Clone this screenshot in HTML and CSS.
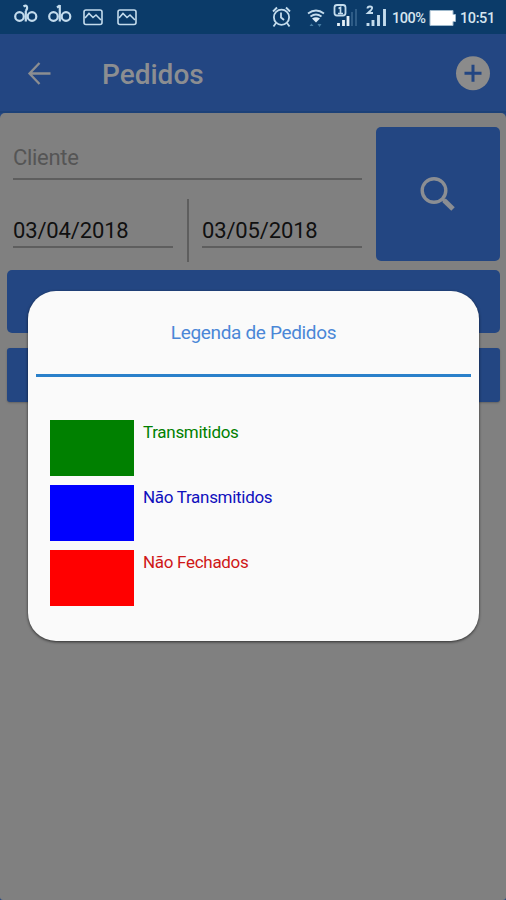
FILE: index.html
```html
<!DOCTYPE html>
<html lang="pt-BR">
<head>
<meta charset="utf-8">
<title>Pedidos</title>
<link rel="stylesheet" href="styles.css">
</head>
<body>
<div class="statusbar">
  <svg class="status-icons" width="140" height="34" viewBox="0 0 140 34" fill="none" stroke="#c4dced" stroke-width="2.200">
    <g><circle cx="19.500" cy="16.500" r="4.300"/><circle cx="32" cy="16.500" r="4.300"/><path d="M25.800 11v10.500M23.500 6.500q3-2 3.500.5t-1.500 4"/></g>
    <g><circle cx="53.500" cy="16.500" r="4.300"/><circle cx="66" cy="16.500" r="4.300"/><path d="M59.800 5v16.500M57 7.500l2.800-2"/></g>
    <g stroke-width="1.600"><rect x="84" y="10" width="18" height="14.500" rx="2"/><path d="M85 18l4-4.500 4 4 3-2.500 5 5"/><rect x="118" y="10" width="18" height="14.500" rx="2"/><path d="M119 18l4-4.500 4 4 3-2.500 5 5"/></g>
  </svg>
  <svg class="system-icons" width="118" height="34" viewBox="270 0 118 34" fill="none" stroke="#c4dced">
    <circle cx="281.500" cy="17.300" r="7.600" stroke-width="1.800"/><path d="M281 12.500v5l3 2.500M273 11.500l4-4M286 7.500l4 4M276 23l-2.500 3.500M287 23l2.500 3.500" stroke-width="1.800"/>
    <path d="M308 13.500q8-6 16 0M310.500 16.500q5.500-4 11 0" stroke-width="1.800"/><path d="M312 18.500q4-2.500 8 0l-4 4z" fill="#dcecf7" stroke="none"/><path d="M309.500 26l2-2.500 2 2.500zM317.500 24h4l-2 3z" fill="#477da3" stroke="none"/>
    <rect x="334.500" y="5" width="11" height="10.500" rx="2.500" stroke-width="1.800"/><path d="M338.500 8.500l2-1v6M338 13.500h5" stroke-width="1.700"/>
    <path d="M338.500 23v3M343.500 20v6M348 16v10" stroke="#e5f0f7" stroke-width="2.800"/><path d="M352 12v14M356 9v17" stroke="#32618a" stroke-width="1.800"/>
    <path d="M367.500 8.500q0-2 2.500-2t2 2q0 1-4 4.500h5" stroke-width="1.900"/><path d="M368 23v3M373 20v6M378.500 15v11M384.500 9v17" stroke-width="2.900"/>
  </svg>
  <span class="battery-text">100%</span>
  <svg class="battery" width="27" height="18" viewBox="0 0 27 18"><path d="M1 1.500h23v4h2.500v7H24v4H1z" fill="#fff" stroke="#9fb9cc"/></svg>
  <span class="clock">10:51</span>
</div>
<header class="appbar">
  <svg width="24" height="24" viewBox="0 0 24 24" fill="none" stroke="#8c8e91" stroke-width="2.300"><path d="M23.500 12.500H2.500M12.500 2L2.500 12.500l10 10.500"/></svg>
  <h1>Pedidos</h1>
  <svg class="add" width="36" height="36" viewBox="0 0 36 36"><circle cx="18" cy="18.300" r="17" fill="#8b8b8b"/><path d="M18 9.800v17M9.500 18.300h17" stroke="#234682" stroke-width="3"/></svg>
</header>
<main>
  <section class="filters">
    <div class="fields">
      <div class="field client">Cliente</div>
      <div class="dates"><div class="field">03/04/2018</div><div class="divider"></div><div class="field">03/05/2018</div></div>
    </div>
    <div class="search"><svg width="36" height="36" viewBox="0 0 36 36" fill="none" stroke="#8b8e93"><circle cx="14" cy="14.500" r="11.800" stroke-width="3.400"/><path d="M22 22.500l3 3" stroke-width="3"/><path d="M24 24.200l9 8.800" stroke-width="5"/></svg></div>
  </section>
  <div class="bar first"></div>
  <div class="bar second"></div>
</main>
<section class="dialog">
  <h2>Legenda de Pedidos</h2>
  <ul>
    <li class="sent"><i></i><span>Transmitidos</span></li>
    <li class="unsent"><i></i><span>Não Transmitidos</span></li>
    <li class="open"><i></i><span>Não Fechados</span></li>
  </ul>
</section>
</body>
</html>
```
FILE: styles.css
```css
* { box-sizing: border-box; }
body { margin: 0; width: 506px; height: 900px; overflow: hidden; position: relative; background: #234682; font-family: Roboto, sans-serif; }
svg { display: block; flex: none; }
.statusbar { height: 34px; display: flex; align-items: center; background: #0b3b69; color: #d6e5ef; font-size: 14.5px; font-weight: 500; }
.system-icons { margin-left: 130px; }
.battery-text { width: 36px; margin-left: 4px; letter-spacing: -.5px; white-space: nowrap; padding-top: 2px; }
.battery { margin: 1px 0 0 1px; }
.clock { margin-left: 4px; padding-top: 2px; letter-spacing: -.4px; }
.appbar { height: 79px; display: flex; align-items: center; padding: 0 15px 0 27px; background: #234682; border-bottom: 2px solid #1c4178; }
h1 { margin: 4px 0 0 51px; color: #8c8e91; font-size: 28px; font-weight: 500; line-height: 36px; }
.add { margin-left: auto; }
main { height: 787px; background: #808080; border-radius: 5px 5px 3px 3px; padding: 14px 6px 0 7px; }
.filters { display: flex; justify-content: space-between; height: 134px; }
.fields { width: 349px; margin-left: 6px; }
.field { font-size: 22px; line-height: 28px; letter-spacing: -.15px; color: #101010; border-bottom: 2px solid #5e5e5e; }
.client { height: 53px; padding-top: 17px; color: #555; letter-spacing: -.3px; }
.dates { display: flex; justify-content: space-between; height: 63px; margin-top: 19px; }
.dates .field { width: 160px; height: 49px; padding-top: 18px; }
.divider { width: 2px; height: 63px; background: #5e5e5e; }
.search { width: 124px; height: 134px; border-radius: 5px; display: flex; align-items: center; justify-content: center; background: #234682; }
.bar { background: #234682; border-radius: 5px; }
.first { height: 63px; margin-top: 9px; }
.second { height: 54px; margin-top: 15px; border-radius: 3px; box-shadow: 0 1px 2px #626262; }
.dialog { position: absolute; left: 28px; top: 291px; width: 451px; height: 350px; padding: 0 8px; border-radius: 28px; background: #fafafa; box-shadow: 0 1px 3px rgba(0,0,0,.65); }
h2 { height: 86px; margin: 0; padding-top: 30px; border-bottom: 3px solid #2a80ca; text-align: center; font-size: 19px; font-weight: 400; line-height: 24px; letter-spacing: -.33px; color: #4a87d7; }
ul { list-style: none; margin: 43px 0 0 14px; padding: 0; display: grid; gap: 9px; }
li { display: flex; gap: 9px; height: 56px; font-size: 17px; line-height: 22px; letter-spacing: -.3px; }
li i { width: 84px; background: currentColor; }
li span { padding-top: 1px; }
.sent { color: green; }
.unsent { color: #00f; }
.unsent span { color: #1010bd; }
.open { color: #f00; }
.open span { color: #cf1717; }
```
